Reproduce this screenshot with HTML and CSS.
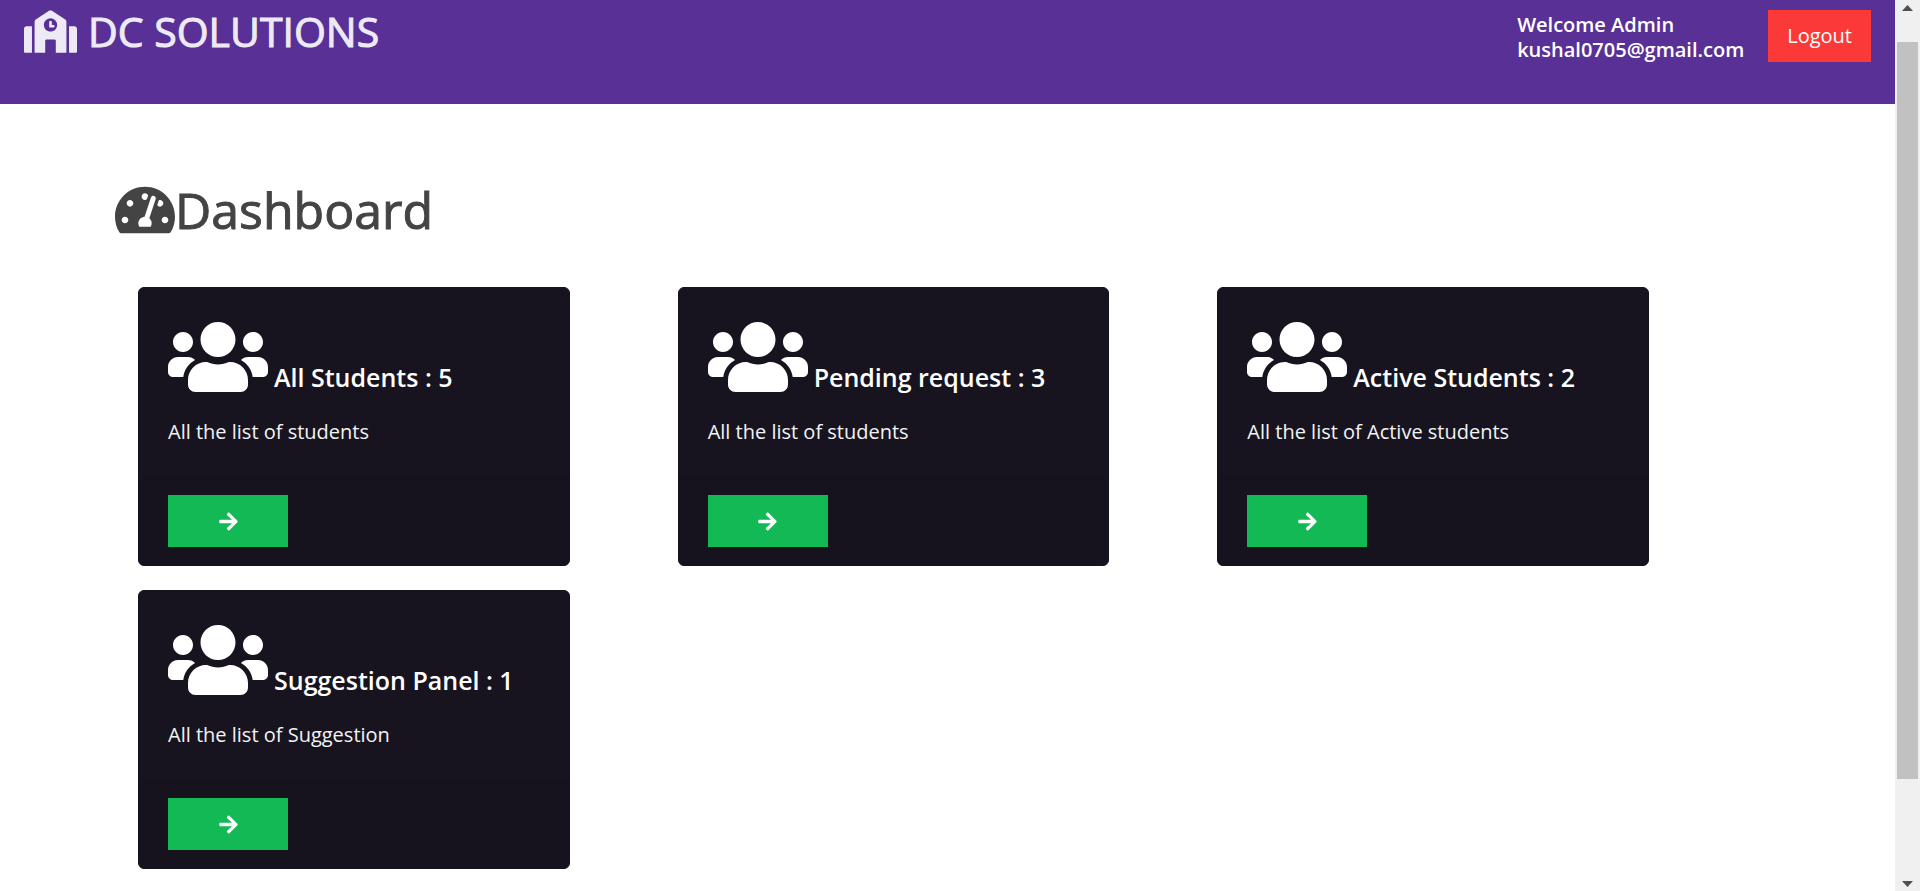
FILE: index.html
```html
<!DOCTYPE html>
<html lang="en">
<head>
<meta charset="utf-8">
<title>DC Solutions - Dashboard</title>
<link rel="stylesheet" href="styles.css">
</head>
<body>
<svg class="sprite" aria-hidden="true">
  <symbol id="users" viewBox="0 0 640 512"><path d="M96 224c35.3 0 64-28.7 64-64s-28.7-64-64-64-64 28.7-64 64 28.7 64 64 64zm448 0c35.3 0 64-28.7 64-64s-28.7-64-64-64-64 28.7-64 64 28.7 64 64 64zm32 32h-64c-17.6 0-33.5 7.1-45.1 18.6 40.3 22.1 68.9 62 75.1 109.4h66c17.7 0 32-14.3 32-32v-32c0-35.3-28.7-64-64-64zm-256 0c61.9 0 112-50.1 112-112S381.9 32 320 32 208 82.1 208 144s50.1 112 112 112zm76.8 32h-8.3c-20.8 10-43.9 16-68.5 16s-47.6-6-68.5-16h-8.3C179.6 288 128 339.6 128 403.2V432c0 26.5 21.5 48 48 48h288c26.5 0 48-21.5 48-48v-28.8c0-63.6-51.6-115.2-115.2-115.2zm-223.7-13.4C161.5 263.1 145.6 256 128 256H64c-35.3 0-64 28.7-64 64v32c0 17.7 14.3 32 32 32h65.9c6.3-47.4 34.9-87.3 75.2-109.4z"/></symbol>
  <symbol id="arrow" viewBox="0 0 448 512"><path d="M190.5 66.9l22.2-22.2c9.4-9.4 24.6-9.4 33.9 0L441 239c9.4 9.4 9.4 24.6 0 33.9L246.6 467.3c-9.4 9.4-24.6 9.4-33.9 0l-22.2-22.2c-9.5-9.5-9.3-25 .4-34.3L311.4 296H24c-13.3 0-24-10.7-24-24v-32c0-13.3 10.7-24 24-24h287.4L190.9 101.2c-9.8-9.3-10-24.8-.4-34.3z"/></symbol>
</svg>
<div class="window">
  <div class="page">
    <header class="topbar">
      <h1 class="brand">
        <svg class="brand-icon" viewBox="0 0 640 512" aria-hidden="true"><path d="M0 224v272c0 8.84 7.16 16 16 16h80V192H32c-17.67 0-32 14.33-32 32zm360-48h-24v-40c0-4.42-3.58-8-8-8h-16c-4.42 0-8 3.58-8 8v64c0 4.42 3.58 8 8 8h48c4.42 0 8-3.58 8-8v-16c0-4.42-3.58-8-8-8zm137.75-63.96l-160-106.67a32.02 32.02 0 0 0-35.5 0l-160 106.67A32.002 32.002 0 0 0 128 138.66V512h128V368c0-8.84 7.16-16 16-16h96c8.84 0 16 7.16 16 16v144h128V138.67c0-10.7-5.35-20.69-14.25-26.63zM320 256c-44.18 0-80-35.82-80-80s35.82-80 80-80 80 35.82 80 80-35.82 80-80 80zm288-64h-64v320h80c8.84 0 16-7.16 16-16V224c0-17.67-14.33-32-32-32z"/></svg>
        <span>DC SOLUTIONS</span>
      </h1>
      <div class="account">
        <p class="welcome">Welcome Admin<br>kushal0705@gmail.com</p>
        <button class="logout" type="button">Logout</button>
      </div>
    </header>
    <main class="content">
      <h2 class="title">
        <svg class="title-icon" viewBox="0 0 576 512" aria-hidden="true"><path d="M288 32C128.94 32 0 160.94 0 320c0 52.8 14.25 102.26 39.06 144.8 5.61 9.62 16.3 15.2 27.44 15.2h443c11.14 0 21.83-5.58 27.44-15.2C561.75 422.26 576 372.8 576 320c0-159.06-128.94-288-288-288zm0 64c14.71 0 26.58 10.13 30.32 23.65-1.11 2.26-2.64 4.23-3.45 6.67l-9.22 27.67c-5.13 3.49-10.97 6.01-17.64 6.01-17.67 0-32-14.33-32-32S270.33 96 288 96zM96 384c-17.67 0-32-14.33-32-32s14.33-32 32-32 32 14.33 32 32-14.33 32-32 32zm48-160c-17.67 0-32-14.33-32-32s14.33-32 32-32 32 14.33 32 32-14.33 32-32 32zm246.77-72.41l-61.33 184C343.13 347.33 352 364.54 352 384c0 11.72-3.38 22.55-8.88 32H232.88c-5.5-9.45-8.88-20.28-8.88-32 0-33.94 26.5-61.43 59.9-63.59l61.34-184.01c4.17-12.56 17.73-19.45 30.36-15.17 12.57 4.19 19.35 17.79 15.17 30.36zm14.66 57.2l15.52-46.55c3.47-1.29 7.13-2.23 11.05-2.23 17.67 0 32 14.33 32 32s-14.33 32-32 32c-11.38-.01-20.89-6.28-26.57-15.22zM480 384c-17.67 0-32-14.33-32-32s14.33-32 32-32 32 14.33 32 32-14.33 32-32 32z"/></svg>
        <span>Dashboard</span>
      </h2>
      <div class="cards">
        <article class="card">
          <div class="card-body">
            <h3 class="card-title"><svg class="card-icon" aria-hidden="true"><use href="#users"/></svg><span>All Students : 5</span></h3>
            <p class="card-text">All the list of students</p>
          </div>
          <div class="card-footer"><button class="go" type="button" aria-label="Open all students"><svg class="go-icon" aria-hidden="true"><use href="#arrow"/></svg></button></div>
        </article>
        <article class="card">
          <div class="card-body">
            <h3 class="card-title"><svg class="card-icon" aria-hidden="true"><use href="#users"/></svg><span>Pending request : 3</span></h3>
            <p class="card-text">All the list of students</p>
          </div>
          <div class="card-footer"><button class="go" type="button" aria-label="Open pending requests"><svg class="go-icon" aria-hidden="true"><use href="#arrow"/></svg></button></div>
        </article>
        <article class="card">
          <div class="card-body">
            <h3 class="card-title"><svg class="card-icon" aria-hidden="true"><use href="#users"/></svg><span>Active Students : 2</span></h3>
            <p class="card-text">All the list of Active students</p>
          </div>
          <div class="card-footer"><button class="go" type="button" aria-label="Open active students"><svg class="go-icon" aria-hidden="true"><use href="#arrow"/></svg></button></div>
        </article>
        <article class="card">
          <div class="card-body">
            <h3 class="card-title"><svg class="card-icon" aria-hidden="true"><use href="#users"/></svg><span>Suggestion Panel : 1</span></h3>
            <p class="card-text">All the list of Suggestion</p>
          </div>
          <div class="card-footer"><button class="go" type="button" aria-label="Open suggestion panel"><svg class="go-icon" aria-hidden="true"><use href="#arrow"/></svg></button></div>
        </article>
      </div>
    </main>
  </div>
  <div class="scrollbar" aria-hidden="true">
    <svg class="scroll-arrow" viewBox="0 0 11 6"><path d="M0 6L5.5 0 11 6z"/></svg>
    <div class="track"><div class="thumb"></div></div>
    <svg class="scroll-arrow" viewBox="0 0 11 6"><path d="M0 0L5.5 6 11 0z"/></svg>
  </div>
</div>
</body>
</html>
```

FILE: styles.css
```css
* {
  box-sizing: border-box;
}

body {
  margin: 0;
  background: #fff;
  font-family: "Open Sans", "Noto Sans", sans-serif;
  font-size: 20px;
  line-height: 32px;
}

h1, h2, h3, p {
  margin: 0;
}

button {
  border: 0;
  font: inherit;
  cursor: pointer;
}

svg {
  fill: currentColor;
}

.sprite {
  display: none;
}

.window {
  display: flex;
  min-height: 100vh;
}

.page {
  flex: 1;
}

/* Header */
.topbar {
  display: flex;
  justify-content: space-between;
  align-items: flex-start;
  padding: 10px 24px 42px;
  background: #593196;
  color: #fff;
}

.brand {
  display: flex;
  align-items: center;
  gap: 11px;
  color: #eeeaf5;
  font-size: 41px;
  font-weight: 400;
  line-height: 43px;
}

/* Thickens the regular weight to a medium one */
.brand span,
.title span {
  -webkit-text-stroke: 1px currentColor;
}

.brand-icon {
  width: 53px;
  height: 43px;
}

.account {
  display: flex;
  gap: 24px;
}

.welcome {
  padding-top: 2px;
  font-weight: 600;
  line-height: 25px;
}

.logout {
  padding: 10px 19px;
  background: #fc3939;
  color: #fff;
}

/* Dashboard */
.content {
  padding: 79px 115px 22px;
}

.title {
  display: flex;
  align-items: center;
  color: #444;
  font-size: 50px;
  font-weight: 400;
  line-height: 54px;
}

.title-icon {
  width: 60px;
  height: 54px;
}

.cards {
  display: grid;
  grid-template-columns: repeat(3, 1fr);
  row-gap: 24px;
  padding: 50px 23px 0;
}

.card {
  width: 80%;
  overflow: hidden;
  border: 1px solid #15121c;
  border-radius: 6px;
  background: #17141f;
  color: #fff;
}

.card-body {
  padding: 29px 29px 28px;
}

.card-title {
  display: flex;
  align-items: flex-end;
  gap: 6px;
  font-size: 25px;
  font-weight: 600;
  line-height: 40px;
}

.card-icon {
  width: 100px;
  height: 80px;
}

.card-text {
  padding-top: 19px;
  color: #f3f3f4;
}

.card-footer {
  padding: 18px 29px;
  border-top: 1px solid #15121c;
  background: #16131e;
}

.go {
  display: flex;
  align-items: center;
  justify-content: center;
  width: 120px;
  height: 52px;
  background: #13b955;
  color: #fff;
}

.go-icon {
  width: 19px;
  height: 21px;
}

/* Scrollbar */
.scrollbar {
  display: flex;
  flex-direction: column;
  align-items: center;
  width: 25px;
  padding: 5px 2px 4px;
  background: #f0f0f0;
  color: #505050;
}

.scroll-arrow {
  width: 11px;
  height: 6px;
}

.track {
  flex: 1;
  width: 21px;
  padding: 31px 0 20px;
}

.thumb {
  height: 90%;
  background: #c1c1c1;
}
```
